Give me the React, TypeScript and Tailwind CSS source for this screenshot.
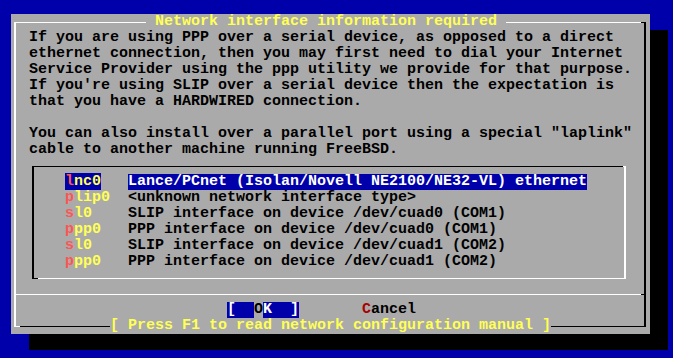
import React from "react";

const paragraph = [
  "If you are using PPP over a serial device, as opposed to a direct",
  "ethernet connection, then you may first need to dial your Internet",
  "Service Provider using the ppp utility we provide for that purpose.",
  "If you're using SLIP over a serial device then the expectation is",
  "that you have a HARDWIRED connection.",
  " ",
  'You can also install over a parallel port using a special "laplink"',
  "cable to another machine running FreeBSD.",
];

const items = [
  { name: "lnc0", desc: "Lance/PCnet (Isolan/Novell NE2100/NE32-VL) ethernet" },
  { name: "plip0", desc: "<unknown network interface type>" },
  { name: "sl0", desc: "SLIP interface on device /dev/cuad0 (COM1)" },
  { name: "ppp0", desc: "PPP interface on device /dev/cuad0 (COM1)" },
  { name: "sl0", desc: "SLIP interface on device /dev/cuad1 (COM2)" },
  { name: "ppp0", desc: "PPP interface on device /dev/cuad1 (COM2)" },
];

export default function App() {
  return (
    <div className="w-[673px] h-[358px] bg-[#0000aa] overflow-hidden pt-[14px] pl-[11px] font-['Liberation_Mono',monospace] text-[15px] leading-[16px] font-bold whitespace-pre text-black">
      <div className="relative w-[639px] h-[320px] bg-[#aaaaaa] shadow-[18px_16px_0_0_#000] pt-[8px] pl-[3px]">
        {/* outer frame */}
        <div className="w-[632px] h-[305px] border-t border-l-2 border-r-2 border-b border-t-white border-l-white border-r-black border-b-black flex flex-col">
          <div className="pt-[7px] pl-[13px] flex flex-col">
            {paragraph.map((l, i) => (
              <div key={i} className="h-[16px]">
                {l}
              </div>
            ))}
          </div>
          {/* list box */}
          <div className="relative mt-[8px] ml-[16px] w-[594px] h-[113px] border-t border-l-2 border-r-2 border-b border-t-black border-l-black border-r-white border-b-white pt-[7px] pl-[31px] flex flex-col">
            {items.map((it, i) => {
              const sel = i === 0;
              return (
                <div key={i} className="h-[16px] flex">
                  <div className="w-[63px]">
                    <span className={sel ? "bg-[#0000aa]" : ""}>
                      <span className="text-[#ff5555]">{it.name[0]}</span>
                      <span className="text-[#ffff55]">{it.name.slice(1)}</span>
                    </span>
                  </div>
                  <span className={sel ? "bg-[#0000aa] text-white" : "text-black"}>{it.desc}</span>
                </div>
              );
            })}
          </div>
          {/* separator */}
          <div className="mt-[15px] h-[1px] flex">
            <div className="flex-1 bg-white" />
            <div className="w-[3px] bg-black" />
          </div>
          {/* buttons */}
          <div className="mt-[7px] h-[16px] pl-[211px] flex">
            <span className="bg-[#0000aa] text-white">{"[  "}</span>
            <span className="text-black">O</span>
            <span className="bg-[#0000aa] text-white">{"K  ]"}</span>
            <span className="ml-[63px]">
              <span className="text-[#aa0000]">C</span>
              <span>ancel</span>
            </span>
          </div>
        </div>

        {/* title over top border */}
        <div className="absolute left-[135px] top-0 h-[16px] bg-[#aaaaaa] text-[#ffff55]">
          {" Network interface information required "}
        </div>
        {/* help line over bottom border */}
        <div className="absolute left-[99px] top-[304px] h-[16px] bg-[#aaaaaa] text-[#ffff55]">
          {"[ Press F1 to read network configuration manual ]"}
        </div>
        {/* corner touches */}
        <div className="absolute left-[3px] top-[312px] w-[6px] h-[1px] bg-white" />
        <div className="absolute left-[630px] top-[8px] w-[5px] h-[1px] bg-black" />
        <div className="absolute left-[21px] top-[264px] w-[6px] h-[1px] bg-black" />
        <div className="absolute left-[612px] top-[152px] w-[3px] h-[1px] bg-white" />
      </div>
    </div>
  );
}
